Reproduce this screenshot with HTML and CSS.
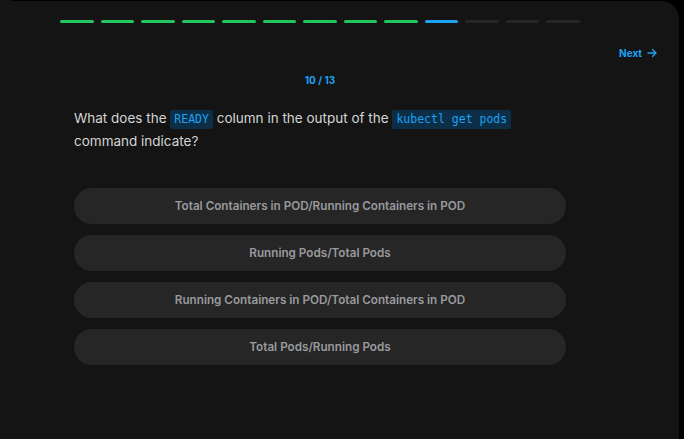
FILE: index.html
```html
<!DOCTYPE html>
<html lang="en">
<head>
<meta charset="utf-8">
<link rel="stylesheet" href="styles.css">
</head>
<body>
<div class="frame">
  <div class="progress">
    <span class="dash done"></span><span class="dash done"></span><span class="dash done"></span><span class="dash done"></span><span class="dash done"></span><span class="dash done"></span><span class="dash done"></span><span class="dash done"></span><span class="dash done"></span><span class="dash current"></span><span class="dash"></span><span class="dash"></span><span class="dash"></span>
  </div>
  <div class="nav">
    <a class="next">Next
      <svg width="10" height="10" viewBox="0 0 10 10" fill="none" stroke="currentColor" stroke-width="1.4" stroke-linecap="round" stroke-linejoin="round"><path d="M1 5h8M5.5 1.5 9 5l-3.5 3.5"/></svg>
    </a>
  </div>
  <div class="column">
    <div class="counter">10 / 13</div>
    <p class="question">What does the <code>READY</code> column in the output of the <code>kubectl get pods</code> command indicate?</p>
    <div class="options">
      <button class="option">Total Containers in POD/Running Containers in POD</button>
      <button class="option">Running Pods/Total Pods</button>
      <button class="option">Running Containers in POD/Total Containers in POD</button>
      <button class="option">Total Pods/Running Pods</button>
    </div>
  </div>
</div>
</body>
</html>
```

FILE: styles.css
```css
html, body {
  margin: 0;
  padding: 0;
  height: 100%;
}
body {
  background: linear-gradient(to right, #141414 0 11px, #000 11px);
  font-family: Inter, "Noto Sans", sans-serif;
  overflow: hidden;
}
.frame {
  margin: 1px 5px 0 0;
  height: 438px;
  background: #141414;
  border-top-right-radius: 18px;
  padding-top: 19px;
  box-sizing: border-box;
}
.progress {
  display: flex;
  gap: 7px;
  width: 520px;
  margin-left: 60px;
}
.dash {
  flex: 1;
  height: 3px;
  border-radius: 2px;
  background: #262626;
}
.dash.done { background: #22c55e; }
.dash.current { background: #1da1f2; }
.nav {
  display: flex;
  justify-content: flex-end;
  padding-right: 22px;
  margin-top: 23px;
}
.next {
  display: flex;
  align-items: center;
  gap: 5px;
  color: #1da1f2;
  font-size: 10px;
  font-weight: 700;
  line-height: 14px;
}
.column {
  width: 520px;
  margin-left: 60px;
}
.counter {
  text-align: center;
  color: #1da1f2;
  font-size: 10px;
  font-weight: 700;
  line-height: 14px;
  margin-top: 13px;
}
.question {
  margin: 20px 14px 0;
  color: #d4d4d4;
  font-size: 13.5px;
  line-height: 22px;
}
.question code {
  font-family: "DejaVu Sans Mono", "Liberation Mono", monospace;
  font-size: 11.5px;
  color: #1da1f2;
  background: #0c2f47;
  padding: 2px 4px 3px;
  border-radius: 2px;
}
.options {
  display: flex;
  flex-direction: column;
  gap: 11px;
  margin: 36px 14px 0;
}
.option {
  height: 36px;
  border: none;
  border-radius: 18px;
  background: #262626;
  color: #999a9e;
  font-family: Inter, "Noto Sans", sans-serif;
  font-size: 11.7px;
  font-weight: 600;
}
```
